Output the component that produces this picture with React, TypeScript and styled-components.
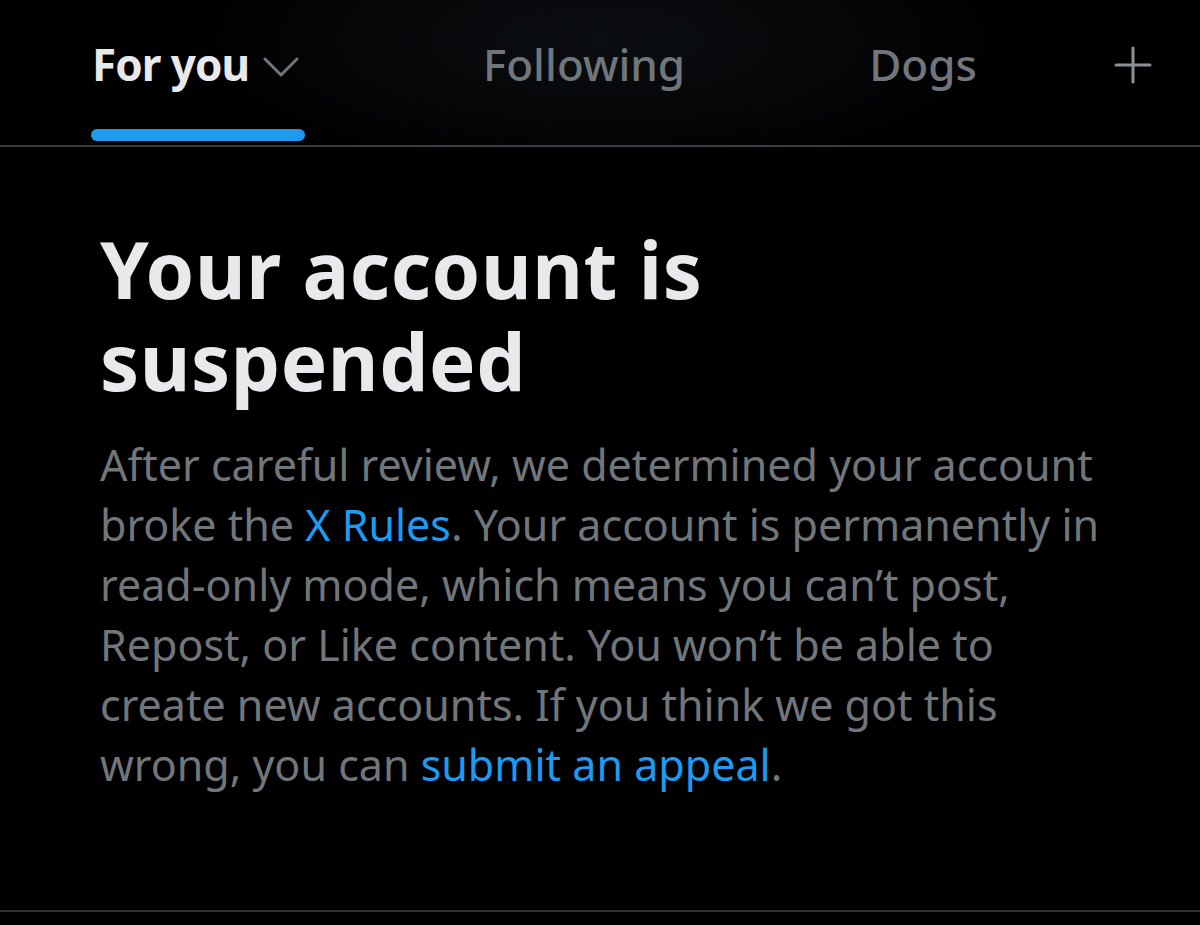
import React from 'react'
import styled, { createGlobalStyle } from 'styled-components'

const GlobalStyle = createGlobalStyle`
  html, body {
    margin: 0;
    padding: 0;
    background: #000;
  }
  body {
    font-family: 'Noto Sans', 'Open Sans', sans-serif;
  }
`

const Screen = styled.div`
  width: 1200px;
  height: 925px;
  background: #000;
  display: flex;
  flex-direction: column;
  overflow: hidden;
`

const TabBar = styled.nav`
  display: flex;
  align-items: flex-start;
  height: 145px;
  padding-left: 92px;
  padding-right: 48px;
  border-bottom: 2px solid #3a3d40;
  background: radial-gradient(ellipse 420px 140px at 600px 40px, #0b0e12 0%, #000 100%);
`

const Tab = styled.div<{ active?: boolean }>`
  position: relative;
  display: flex;
  align-items: flex-start;
  align-self: stretch;
  gap: 14px;
  padding-top: 38px;
  box-sizing: border-box;
  white-space: nowrap;
  font-size: 44px;
  font-weight: ${({ active }) => (active ? 700 : 500)};
  color: ${({ active }) => (active ? '#e7e9ea' : '#71767b')};
  letter-spacing: ${({ active }) => (active ? '-1px' : '0')};
  line-height: 52px;

  & + & {
    margin-left: 184px;
  }
`

const Underline = styled.span`
  position: absolute;
  left: -1px;
  bottom: 4px;
  width: 214px;
  height: 12px;
  border-radius: 6px;
  background: #1d9bf0;
`

const AddButton = styled.div`
  margin-left: auto;
  padding-top: 46px;
`

const Content = styled.main`
  flex: 1;
  padding: 0 90px 0 100px;
  border-bottom: 2px solid #2f3336;
  margin-bottom: 13px;
`

const Title = styled.h1`
  margin: 76px 0 0;
  font-size: 78px;
  font-weight: 700;
  line-height: 92px;
  color: #e7e9ea;
  letter-spacing: 0.6px;
`

const Body = styled.p`
  margin: 28px 0 0;
  font-size: 43px;
  line-height: 60px;
  color: #71767b;
  font-weight: 400;
`

const Link = styled.a`
  color: #1d9bf0;
  text-decoration: none;
`

const Chevron = () => (
  <svg width="36" height="22" viewBox="0 0 36 22" style={{ marginTop: 18 }}>
    <polyline points="2,3 18,19 34,3" fill="none" stroke="#71767b" strokeWidth="3" strokeLinecap="round" strokeLinejoin="round" />
  </svg>
)

const Plus = () => (
  <svg width="38" height="38" viewBox="0 0 38 38">
    <path d="M19 2 V36 M2 19 H36" stroke="#8b9196" strokeWidth="3" strokeLinecap="round" />
  </svg>
)

export default function App() {
  return (
    <Screen>
      <GlobalStyle />
      <TabBar>
        <Tab active>
          For you
          <Chevron />
          <Underline />
        </Tab>
        <Tab>Following</Tab>
        <Tab>Dogs</Tab>
        <AddButton>
          <Plus />
        </AddButton>
      </TabBar>
      <Content>
        <Title>
          Your account is
          <br />
          suspended
        </Title>
        <Body>
          After careful review, we determined your account broke the <Link href="#">X Rules</Link>. Your account is
          permanently in read-only mode, which means you can’t post, Repost, or Like content. You won’t be able to
          create new accounts. If you think we got this wrong, you can <Link href="#">submit an appeal</Link>.
        </Body>
      </Content>
    </Screen>
  )
}
